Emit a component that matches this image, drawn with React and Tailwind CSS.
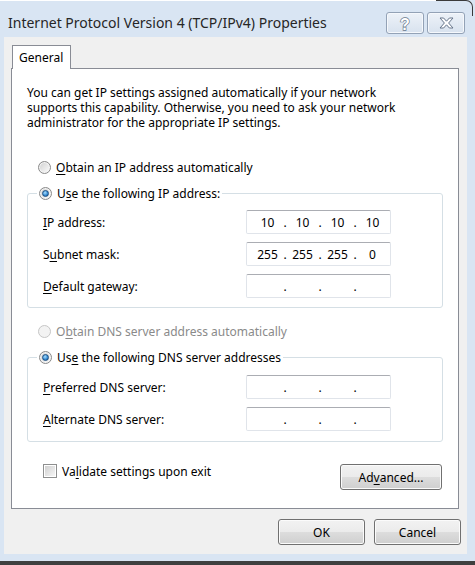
import React from 'react';

const U = ({ children }) => <span className="underline underline-offset-[2px]">{children}</span>;

const Radio = ({ checked, disabled }) => (
  <span
    className={`w-[13px] h-[13px] rounded-full border flex items-center justify-center shrink-0 ${
      disabled
        ? 'border-[#c6c6c6] bg-[#f3f3f3]'
        : 'border-[#8a8a8a] bg-[linear-gradient(135deg,#cfcfcf,#fdfdfd)] shadow-[inset_0_0_0_1px_#f4f4f4]'
    }`}
  >
    {checked && (
      <span className="w-[7px] h-[7px] rounded-full border border-[#1b4f82] bg-[radial-gradient(circle_at_40%_35%,#a9defc,#3b8fd6_55%,#11508e)]" />
    )}
  </span>
);

const IpBox = ({ parts = ['', '', '', ''] }) => (
  <div className="w-[145px] h-[24px] flex items-center pl-[6px] bg-white border border-[#e0e4ea] border-t-[#abadb3] rounded-[2px]">
    {parts.map((p, i) => (
      <React.Fragment key={i}>
        <span className="w-[29px] text-center">{p}</span>
        {i < 3 && <span className="w-[6px] text-center">.</span>}
      </React.Fragment>
    ))}
  </div>
);

const Row = ({ label, parts }) => (
  <div className="h-[24px] flex items-center">
    <span className="w-[203px]">{label}</span>
    <IpBox parts={parts} />
  </div>
);

const Button = ({ className = '', children }) => (
  <button className={`h-[26px] rounded-[3px] border border-[#707070] bg-[linear-gradient(#f2f2f2,#ebebeb_50%,#dddddd_50%,#cfcfcf)] shadow-[inset_0_0_0_1px_#fbfbfb] text-black flex items-center justify-center ${className}`}>
    {children}
  </button>
);

const TitleBtn = ({ children }) => (
  <div className="w-[38px] h-[22px] rounded-[3px] border border-[#93a2b6] bg-[linear-gradient(#edf2f8,#d8e2ee)] shadow-[inset_0_0_0_1px_#f5f8fc] flex items-center justify-center">
    {children}
  </div>
);

export default function App() {
  return (
    <div className="relative w-[475px] h-[565px] bg-[#d9e5f3] flex flex-col overflow-hidden font-['Noto_Sans',sans-serif] text-[12px] leading-[15px] text-black">
      {/* frame edge at the top right */}
      <div className="absolute top-0 left-0 w-[436px] h-px bg-white" />
      <div className="absolute top-0 left-[436px] w-[37px] h-[16px] border-t border-r border-[#3a3a3a] rounded-tr-[7px]" />

      {/* title bar */}
      <div className="h-[37px] flex items-start pt-[12px] pl-[8px] pr-[10px]">
        <span className="text-[14px] leading-[21px] text-[#262626]">Internet Protocol Version 4 (TCP/IPv4) Properties</span>
        <div className="ml-auto flex gap-[3px]">
          <TitleBtn>
            <svg width="14" height="17" viewBox="0 0 14 17">
              <text x="7" y="14.5" textAnchor="middle" fontFamily="Liberation Sans, sans-serif" fontWeight="bold" fontSize="16" fill="#fff" stroke="#66758a" strokeWidth="1.3" paintOrder="stroke">?</text>
            </svg>
          </TitleBtn>
          <TitleBtn>
            <svg width="15" height="12" viewBox="0 0 15 12">
              <path d="M1 1h3.6L7.5 4.2 10.4 1H14L9.6 6 14 11h-3.6L7.5 7.8 4.6 11H1l4.4-5z" fill="#fff" stroke="#66758a" strokeWidth="1" strokeLinejoin="round" />
            </svg>
          </TitleBtn>
        </div>
      </div>

      {/* client area */}
      <div className="ml-[4px] mr-[8px] h-[517px] bg-[#f0f0f0] flex flex-col pt-[8px] pl-[7px] pr-[6px]">
        <div className="ml-[1px] w-[59px] h-[24px] -mb-px relative z-10 bg-white border border-b-0 border-[#898c95] pl-[6px] pt-[4px]">
          General
        </div>

        <div className="mr-[2px] h-[441px] bg-white border border-[#898c95] flex flex-col">
          <div className="pl-[15px] pt-[16px] whitespace-nowrap">
            <p className="h-[15px]">You can get IP settings assigned automatically if your network</p>
            <p className="h-[15px]">supports this capability. Otherwise, you need to ask your network</p>
            <p className="h-[15px]">administrator for the appropriate IP settings.</p>
          </div>

          <label className="ml-[26px] mt-[29px] h-[16px] flex items-center gap-[5px]">
            <Radio />
            <span><U>O</U>btain an IP address automatically</span>
          </label>

          <fieldset className="ml-[15px] w-[416px] mt-[10px] border border-[#d5dfe5] rounded-[3px]">
            <legend className="ml-[9px] px-[2px]">
              <span className="h-[16px] flex items-center gap-[5px]">
                <Radio checked />
                <span>U<U>s</U>e the following IP address:</span>
              </span>
            </legend>
            <div className="pl-[15px] pt-[9px] pb-[9px] flex flex-col gap-[8px]">
              <Row label={<><U>I</U>P address:</>} parts={['10', '10', '10', '10']} />
              <Row label={<>S<U>u</U>bnet mask:</>} parts={['255', '255', '255', '0']} />
              <Row label={<><U>D</U>efault gateway:</>} />
            </div>
          </fieldset>

          <label className="ml-[26px] mt-[15px] h-[16px] flex items-center gap-[5px] text-[#8a8a8a]">
            <Radio disabled />
            <span>O<U>b</U>tain DNS server address automatically</span>
          </label>

          <fieldset className="ml-[15px] w-[416px] mt-[10px] border border-[#d5dfe5] rounded-[3px]">
            <legend className="ml-[9px] px-[2px]">
              <span className="h-[16px] flex items-center gap-[5px]">
                <Radio checked />
                <span>Us<U>e</U> the following DNS server addresses</span>
              </span>
            </legend>
            <div className="pl-[15px] pt-[10px] pb-[10px] flex flex-col gap-[8px]">
              <Row label={<><U>P</U>referred DNS server:</>} />
              <Row label={<><U>A</U>lternate DNS server:</>} />
            </div>
          </fieldset>

          <div className="ml-[15px] w-[415px] mt-[21px] flex items-start justify-between">
            <label className="ml-[16px] h-[16px] flex items-center gap-[5px]">
              <span className="w-[14px] h-[14px] border border-[#8e8f8f] bg-white p-px">
                <span className="block w-full h-full bg-[linear-gradient(135deg,#d0d0d0,#f6f6f6)]" />
              </span>
              <span>Va<U>l</U>idate settings upon exit</span>
            </label>
            <Button className="mt-px w-[102px]">Ad<U>v</U>anced...</Button>
          </div>
        </div>

        <div className="mt-[10px] flex justify-end gap-[9px]">
          <Button className="w-[87px]">OK</Button>
          <Button className="w-[87px]">Cancel</Button>
        </div>
      </div>

      <div className="h-[7px]" />
      <div className="h-[4px] bg-[#3f3f3f]" />
    </div>
  );
}
